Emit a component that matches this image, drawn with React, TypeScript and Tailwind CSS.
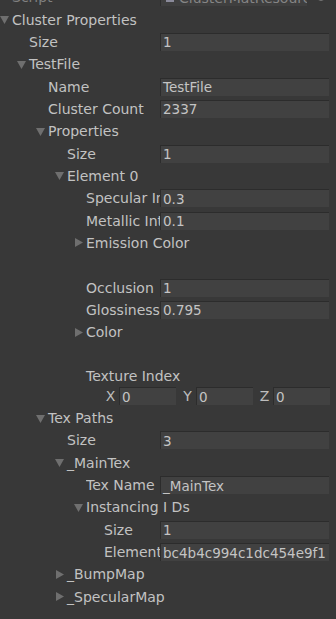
import React from "react";

const indent = ["pl-0", "pl-[17px]", "pl-[36px]", "pl-[55px]", "pl-[74px]", "pl-[92px]"];

type Arrow = "down" | "right" | undefined;

function Tri({ dir }: { dir: Arrow }) {
  if (!dir) return <span className="w-[12px] shrink-0" />;
  return (
    <span className="w-[12px] shrink-0 flex items-center">
      <svg width="9" height="9" viewBox="0 0 9 9">
        {dir === "down" ? (
          <polygon points="0,1 9,1 4.5,9" fill="#6f6f6f" />
        ) : (
          <polygon points="1,0 9,4.5 1,9" fill="#6f6f6f" />
        )}
      </svg>
    </span>
  );
}

function Field({ value }: { value: string }) {
  return (
    <div className="flex-1 min-w-0 h-[18px] bg-[#414141] border-t border-l border-[#2c2c2c] pl-[2px] flex items-center overflow-hidden whitespace-nowrap text-[13.5px] text-[#c4c4c4]">
      {value}
    </div>
  );
}

function Row({ level, label, arrow, value }: { level: number; label?: string; arrow?: Arrow; value?: string }) {
  if (value === undefined) {
    return (
      <div className={`flex items-center h-[22.35px] whitespace-nowrap ${indent[level]}`}>
        <Tri dir={arrow} />
        <span>{label}</span>
      </div>
    );
  }
  return (
    <div className="flex items-center h-[22.35px] pr-[7px]">
      <div className={`w-[160px] shrink-0 flex items-center whitespace-nowrap ${indent[level]}`}>
        <Tri dir={arrow} />
        <span className="min-w-0 overflow-hidden">{label}</span>
      </div>
      <Field value={value} />
    </div>
  );
}

function Vec() {
  const cells = ["X", "Y", "Z"];
  return (
    <div className="grid grid-cols-3 gap-[3px] h-[21px] items-center pl-[102px] pr-[6px]">
      {cells.map((c) => (
        <div key={c} className="flex items-center">
          <span className="w-[17px] text-center text-[#bdbdbd]">{c}</span>
          <Field value="0" />
        </div>
      ))}
    </div>
  );
}

export default function App() {
  return (
    <div
      className="w-[336px] h-[619px] overflow-hidden bg-[#383838] text-[#c2c2c2] text-[14px] leading-[18px]"
      style={{ fontFamily: '"DejaVu Sans", Verdana, sans-serif' }}
    >
      {/* script row, cut off at the top */}
      <div className="flex items-center h-[22.35px] -mt-[14px]">
        <div className="w-[160px] shrink-0 pl-[12px] text-[#808080]">Script</div>
        <div className="w-[147px] h-[18px] bg-[#3f3f3f] border-t border-l border-[#2e2e2e] flex items-center gap-[5px] pl-[5px] overflow-hidden whitespace-nowrap text-[#858585]">
          <span className="w-[8px] h-[8px] bg-[#8a8a9a] shrink-0" />
          <span>ClusterMatResources</span>
        </div>
        <span className="ml-[10px] w-[8px] h-[8px] rounded-full border border-[#777]" />
      </div>

      <Row level={0} arrow="down" label="Cluster Properties" />
      <Row level={1} label="Size" value="1" />
      <Row level={1} arrow="down" label="TestFile" />
      <Row level={2} label="Name" value="TestFile" />
      <Row level={2} label="Cluster Count" value="2337" />
      <Row level={2} arrow="down" label="Properties" />
      <Row level={3} label="Size" value="1" />
      <Row level={3} arrow="down" label="Element 0" />
      <Row level={4} label="Specular Intensity" value="0.3" />
      <Row level={4} label="Metallic Intensity" value="0.1" />
      <Row level={4} arrow="right" label="Emission Color" />
      <Row level={4} />
      <Row level={4} label="Occlusion" value="1" />
      <Row level={4} label="Glossiness" value="0.795" />
      <Row level={4} arrow="right" label="Color" />
      <Row level={4} />
      <div className="h-[20px] flex items-center pl-[86px]">Texture Index</div>
      <Vec />
      <Row level={2} arrow="down" label="Tex Paths" />
      <Row level={3} label="Size" value="3" />
      <Row level={3} arrow="down" label="_MainTex" />
      <Row level={4} label="Tex Name" value="_MainTex" />
      <Row level={4} arrow="down" label="Instancing I Ds" />
      <Row level={5} label="Size" value="1" />
      <Row level={5} label="Element 0" value="bc4b4c994c1dc454e9f1" />
      <Row level={3} arrow="right" label="_BumpMap" />
      <Row level={3} arrow="right" label="_SpecularMap" />
    </div>
  );
}
